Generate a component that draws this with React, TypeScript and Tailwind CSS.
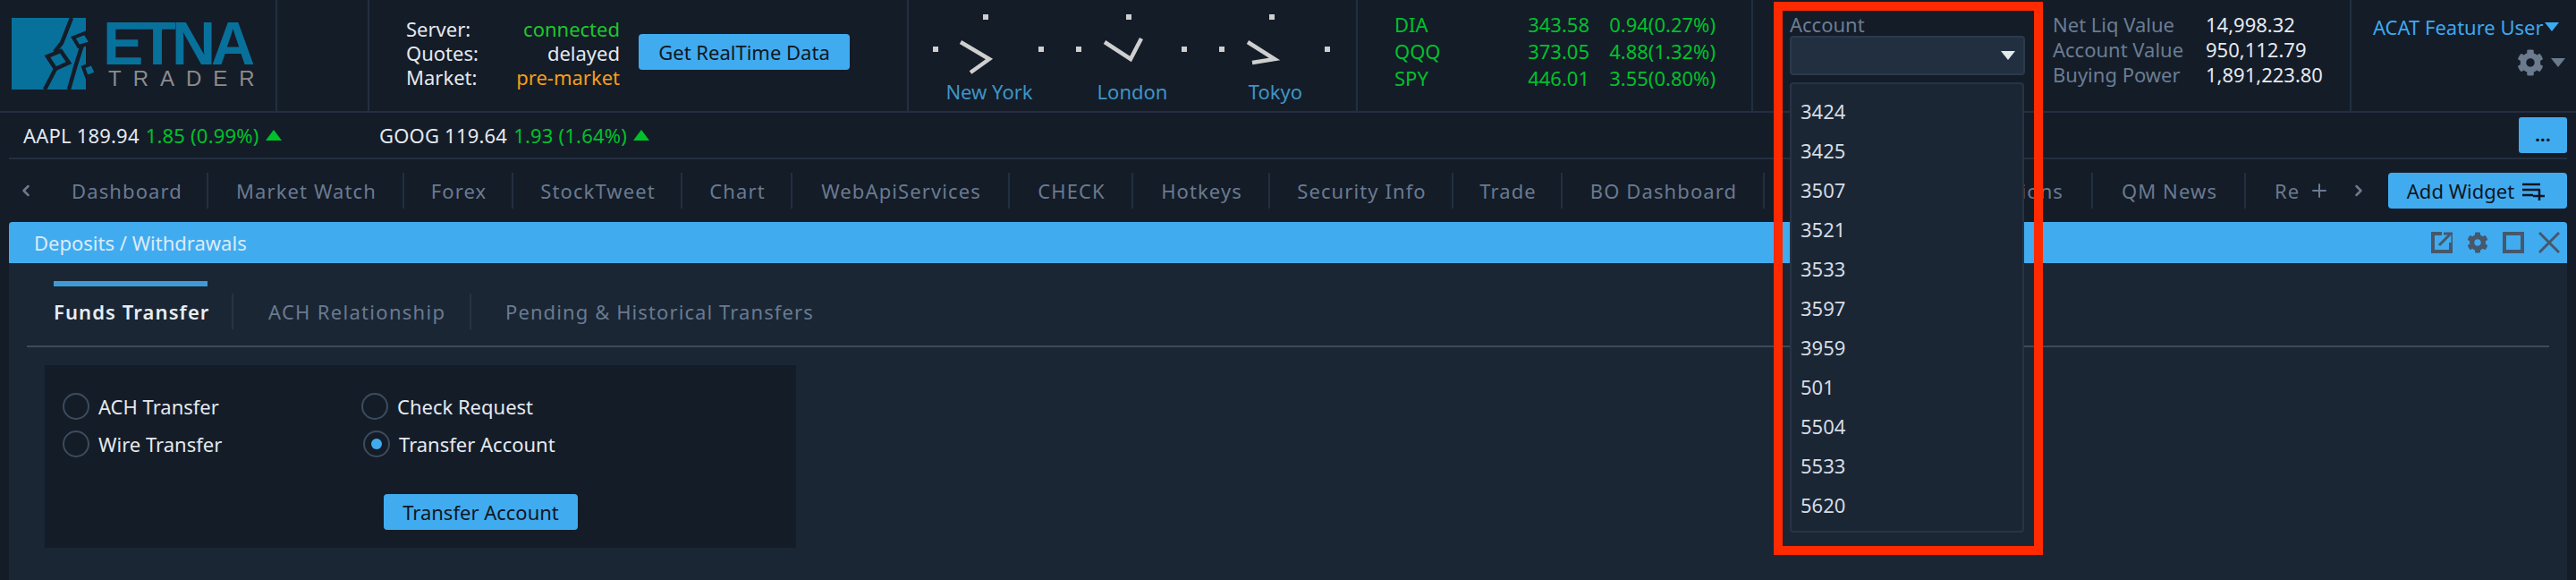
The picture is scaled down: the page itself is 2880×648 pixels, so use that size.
import { ChevronLeft, ChevronRight, Plus } from 'lucide-react';
import { FaCog } from 'react-icons/fa';

const tabs = [
  { label: 'Dashboard', w: 'w-[182px] justify-center pl-[2px]' },
  { label: 'Market Watch', w: 'w-[219px] justify-center pl-[2px]' },
  { label: 'Forex', w: 'w-[122px] justify-center pl-[2px]' },
  { label: 'StockTweet', w: 'w-[189px] justify-center pl-[2px]' },
  { label: 'Chart', w: 'w-[123px] justify-center pl-[2px]' },
  { label: 'WebApiServices', w: 'w-[243px] justify-center pl-[2px]' },
  { label: 'CHECK', w: 'w-[138px] justify-center pl-[2px]' },
  { label: 'Hotkeys', w: 'w-[153px] justify-center pl-[2px]' },
  { label: 'Security Info', w: 'w-[205px] justify-center pl-[2px]' },
  { label: 'Trade', w: 'w-[122px] justify-center pl-[2px]' },
  { label: 'BO Dashboard', w: 'w-[226px] justify-center pl-[2px]' },
  { label: 'Account Transactions', w: 'w-[367px] justify-end pr-[31px]' },
  { label: 'QM News', w: 'w-[171px] justify-center pl-[2px]' },
];

const indices = [
  { s: 'DIA', p: '343.58', c: '0.94(0.27%)' },
  { s: 'QQQ', p: '373.05', c: '4.88(1.32%)' },
  { s: 'SPY', p: '446.01', c: '3.55(0.80%)' },
];

const accounts = ['3424', '3425', '3507', '3521', '3533', '3597', '3959', '501', '5504', '5533', '5620'];

const clocks = [
  { city: 'New York', hands: '32,44 64,63 43,78' },
  { city: 'London', hands: '33,44 62,63 74,40' },
  { city: 'Tokyo', hands: '33,44 63,63 38,67' },
];

function Clock({ city, hands }: { city: string; hands: string }) {
  return (
    <div className="w-[128px] mr-[32px] flex flex-col items-center">
      <svg width="128" height="85" viewBox="0 0 128 85" className="block">
        <rect x="57" y="13" width="6" height="6" fill="#cfcfcf" />
        <rect x="1" y="49" width="6" height="6" fill="#cfcfcf" />
        <rect x="119" y="49" width="6" height="6" fill="#cfcfcf" />
        <polyline points={hands} fill="none" stroke="#cfcfcf" strokeWidth="4.5" />
      </svg>
      <div className="text-[22px] leading-[28px] text-[#3f94c6] whitespace-nowrap">{city}</div>
    </div>
  );
}

function Logo() {
  return (
    <div className="flex items-start pl-[13px] pt-[20px]">
      <svg width="102" height="80" viewBox="0 0 102 80" className="block shrink-0">
        <rect width="83" height="80" fill="#08719b" />
        <polyline points="67,0 56,28 48,38" fill="none" stroke="#141c28" strokeWidth="4.5" />
        <polygon points="40,43 55,37 64,50 49,57" fill="none" stroke="#141c28" strokeWidth="4.5" />
        <polyline points="49,57 37,80" fill="none" stroke="#141c28" strokeWidth="4.5" />
        <polyline points="79,30 72,52 64,80" fill="none" stroke="#141c28" strokeWidth="4.5" />
        <polygon points="69,22 82,17 89,28 75,32" fill="#08719b" stroke="#141c28" strokeWidth="4" />
        <polygon points="80,55 90,51 95,62 84,66" fill="#08719b" stroke="#141c28" strokeWidth="4" />
      </svg>
      <div className="flex flex-col">
        <div className="font-['Liberation_Sans'] font-bold text-[68px] leading-[50px] tracking-[-5px] text-[#08719b] h-[54px] mt-[3px]">ETNA</div>
        <div className="font-['Liberation_Sans'] text-[24px] leading-[22px] tracking-[13px] text-[#8c8c8c] ml-[6px] whitespace-nowrap">TRADER</div>
      </div>
    </div>
  );
}

function Radio({ label, checked }: { label: string; checked?: boolean }) {
  return (
    <div className="flex items-center gap-[10px] h-[30px]">
      <div className="w-[30px] h-[30px] rounded-full border-2 border-[#3c4c5e] flex items-center justify-center">
        {checked && <div className="w-[12px] h-[12px] rounded-full bg-[#41abf0]" />}
      </div>
      <span className="text-[22px] text-[#e5e9ee]">{label}</span>
    </div>
  );
}

export default function App() {
  return (
    <div className="relative h-[648px] w-[2880px] overflow-hidden bg-[#141c28] font-['Noto_Sans',sans-serif] flex flex-col">
      {/* top bar */}
      <div className="flex h-[126px] shrink-0 border-b-2 border-[#222f40]">
        <div className="w-[310px] border-r-2 border-[#222f40]"><Logo /></div>
        <div className="w-[103px] border-r-2 border-[#222f40]" />
        <div className="w-[603px] border-r-2 border-[#222f40] flex pl-[41px] pt-[19px]">
          <div className="w-[239px] text-[22px] leading-[27px]">
            <div className="flex justify-between"><span className="text-[#e5e9ee]">Server:</span><span className="text-[#1fc52c]">connected</span></div>
            <div className="flex justify-between"><span className="text-[#e5e9ee]">Quotes:</span><span className="text-[#e5e9ee]">delayed</span></div>
            <div className="flex justify-between"><span className="text-[#e5e9ee]">Market:</span><span className="text-[#f59e1b]">pre-market</span></div>
          </div>
          <button className="ml-[21px] mt-[19px] w-[236px] h-[40px] rounded-[4px] bg-[#41abf0] text-[22px] text-[#0f1722]">Get RealTime Data</button>
        </div>
        <div className="w-[502px] border-r-2 border-[#222f40] flex pl-[26px] pt-[3px]">
          {clocks.map(c => <Clock key={c.city} {...c} />)}
        </div>
        <div className="w-[442px] border-r-2 border-[#222f40] pl-[41px] pt-[12px] text-[22px] leading-[30px] text-[#00c02c]">
          {indices.map(i => (
            <div key={i.s} className="flex">
              <span className="w-[130px]">{i.s}</span>
              <span className="w-[88px] text-right">{i.p}</span>
              <span className="w-[141px] text-right">{i.c}</span>
            </div>
          ))}
        </div>
        <div className="w-[669px] border-r-2 border-[#222f40] flex pl-[41px] pt-[14px]">
          <div className="relative w-[263px]">
            <div className="text-[22px] leading-[26px] text-[#6b7c93]">Account</div>
            <div className="h-[44px] bg-[#212f41] border-2 border-[#2a3a4d] rounded-[4px] flex items-center justify-end pr-[9px]">
              <svg width="16" height="10" viewBox="0 0 16 10"><polygon points="0,0 16,0 8,10" fill="#e5e9ee" /></svg>
            </div>
            <div className="absolute z-10 left-0 top-[78px] w-[262px] h-[503px] bg-[#1a2634] border-2 border-[#263445] rounded-[4px] pt-[8px] pl-[10px]">
              {accounts.map(a => (
                <div key={a} className="h-[44px] flex items-center text-[22px] text-[#d5dce4]">{a}</div>
              ))}
            </div>
          </div>
          <div className="ml-[31px] -mt-[1px] text-[22px] leading-[28px]">
            {[['Net Liq Value', '14,998.32'], ['Account Value', '950,112.79'], ['Buying Power', '1,891,223.80']].map(r => (
              <div key={r[0]} className="flex">
                <span className="w-[171px] text-[#6b7c93]">{r[0]}</span>
                <span className="text-[#e5e9ee]">{r[1]}</span>
              </div>
            ))}
          </div>
        </div>
        <div className="flex-1 pl-[24px] pt-[15px]">
          <div className="flex items-center text-[22px] leading-[30px] text-[#3ca9f0] whitespace-nowrap">
            ACAT Feature User
            <svg width="16" height="10" viewBox="0 0 16 10" className="ml-[1px]"><polygon points="0,0 16,0 8,10" fill="#3ca9f0" /></svg>
          </div>
          <div className="flex items-center justify-end pr-[12px] mt-[10px] gap-[8px]">
            <FaCog className="w-[30px] h-[30px] text-[#6b7a8c]" />
            <svg width="16" height="10" viewBox="0 0 16 10"><polygon points="0,0 16,0 8,10" fill="#6b7a8c" /></svg>
          </div>
        </div>
      </div>

      {/* ticker row */}
      <div className="h-[50px] shrink-0 flex items-center pl-[26px] pr-[10px] text-[22px] tracking-[0.2px] text-[#e5e9ee]">
        <div className="w-[398px] flex items-center gap-[7px]">
          <span>AAPL 189.94</span><span className="text-[#00c02c]">1.85 (0.99%)</span>
          <svg width="18" height="12" viewBox="0 0 18 12"><polygon points="9,0 18,12 0,12" fill="#00c02c" /></svg>
        </div>
        <div className="flex items-center gap-[7px]">
          <span>GOOG 119.64</span><span className="text-[#00c02c]">1.93 (1.64%)</span>
          <svg width="18" height="12" viewBox="0 0 18 12"><polygon points="9,0 18,12 0,12" fill="#00c02c" /></svg>
        </div>
        <button className="ml-auto w-[54px] h-[40px] rounded-[3px] bg-[#41abf0] text-[20px] leading-none text-[#0f1722] font-bold">...</button>
      </div>
      <div className="mx-[10px] h-[2px] shrink-0 bg-[#222f40]" />

      {/* tab row */}
      <div className="h-[70px] shrink-0 flex items-center pr-[10px]">
        <div className="w-[51px] pl-[19px]"><ChevronLeft className="w-[20px] h-[24px] text-[#6b7a8c]" strokeWidth={3} /></div>
        {tabs.map(t => (
          <div key={t.label} className={`${t.w} h-[40px] border-r-2 border-[#222f40] flex items-center text-[22px] tracking-[1.1px] text-[#6a7a90] whitespace-nowrap overflow-hidden`}>{t.label}</div>
        ))}
        <div className="ml-[32px] text-[22px] tracking-[1.1px] text-[#6a7a90]">Re</div>
        <Plus className="ml-[10px] w-[24px] h-[24px] text-[#6a7a90]" />
        <ChevronRight className="ml-[22px] w-[20px] h-[24px] text-[#6b7a8c]" strokeWidth={3} />
        <button className="ml-auto w-[200px] h-[40px] rounded-[4px] bg-[#41abf0] text-[22px] text-[#0f1722] flex items-center justify-center gap-[8px] pr-[4px]">
          Add Widget
          <svg width="26" height="24" viewBox="0 0 26 24" fill="none" stroke="#0f1722" strokeWidth="2.5">
            <path d="M1 5h20M1 11h20M1 17h12M20 11v12M13 18h13" />
          </svg>
        </button>
      </div>

      {/* panel */}
      <div className="mx-[10px] flex-1 flex flex-col bg-[#1a2634]">
        <div className="h-[46px] shrink-0 rounded-t-[4px] bg-[#41abf0] flex items-center pl-[28px] pr-[8px] text-[22px] text-[#dcebf7]">
          <span>Deposits / Withdrawals</span>
          <div className="ml-auto flex items-center gap-[16px] text-[#46586b]">
            <svg width="24" height="24" viewBox="0 0 24 24" fill="none" stroke="currentColor" strokeWidth="4">
              <path d="M12 2H2v20h20V12" />
              <path d="M9 15L21 3" strokeWidth="3" />
              <path d="M14 2h10v10" strokeWidth="3" />
            </svg>
            <FaCog className="w-[24px] h-[24px]" />
            <svg width="24" height="24" viewBox="0 0 24 24" fill="none" stroke="currentColor" strokeWidth="4">
              <rect x="2" y="2" width="20" height="20" />
            </svg>
            <svg width="24" height="24" viewBox="0 0 24 24" fill="none" stroke="currentColor" strokeWidth="3">
              <path d="M1 1L23 23M23 1L1 23" />
            </svg>
          </div>
        </div>
        <div className="mx-[20px]">
          <div className="ml-[30px] mt-[20px] w-[172px] h-[6px] bg-[#3f9bd6]" />
          <div className="mt-[8px] pl-[30px] flex h-[40px] text-[22px] tracking-[1.1px]">
            <div className="w-[201px] border-r-2 border-[#263445] flex items-center font-semibold text-[#e8edf2] whitespace-nowrap">Funds Transfer</div>
            <div className="w-[266px] border-r-2 border-[#263445] flex items-center pl-[39px] text-[#6a7a90] tracking-[1.3px]">ACH Relationship</div>
            <div className="pl-[38px] flex items-center text-[#6a7a90]">Pending &amp; Historical Transfers</div>
          </div>
          <div className="mt-[18px] h-[2px] bg-[#3b4a5c]" />
        </div>
        <div className="ml-[40px] mt-[20px] w-[840px] h-[204px] bg-[#141c28] pl-[20px] pt-[31px]">
          <div className="grid grid-cols-[334px_1fr] gap-y-[12px]">
            <Radio label="ACH Transfer" />
            <Radio label="Check Request" />
            <Radio label="Wire Transfer" />
            <div className="ml-[2px]"><Radio label="Transfer Account" checked /></div>
          </div>
          <button className="ml-[359px] mt-[41px] w-[217px] h-[40px] rounded-[4px] bg-[#41abf0] text-[22px] text-[#0f1722]">Transfer Account</button>
        </div>
      </div>

      {/* red annotation frame */}
      <div className="absolute z-20 left-[1983px] top-[2px] w-[301px] h-[618px] border-[10px] border-[#ff2a00] pointer-events-none" />
    </div>
  );
}
